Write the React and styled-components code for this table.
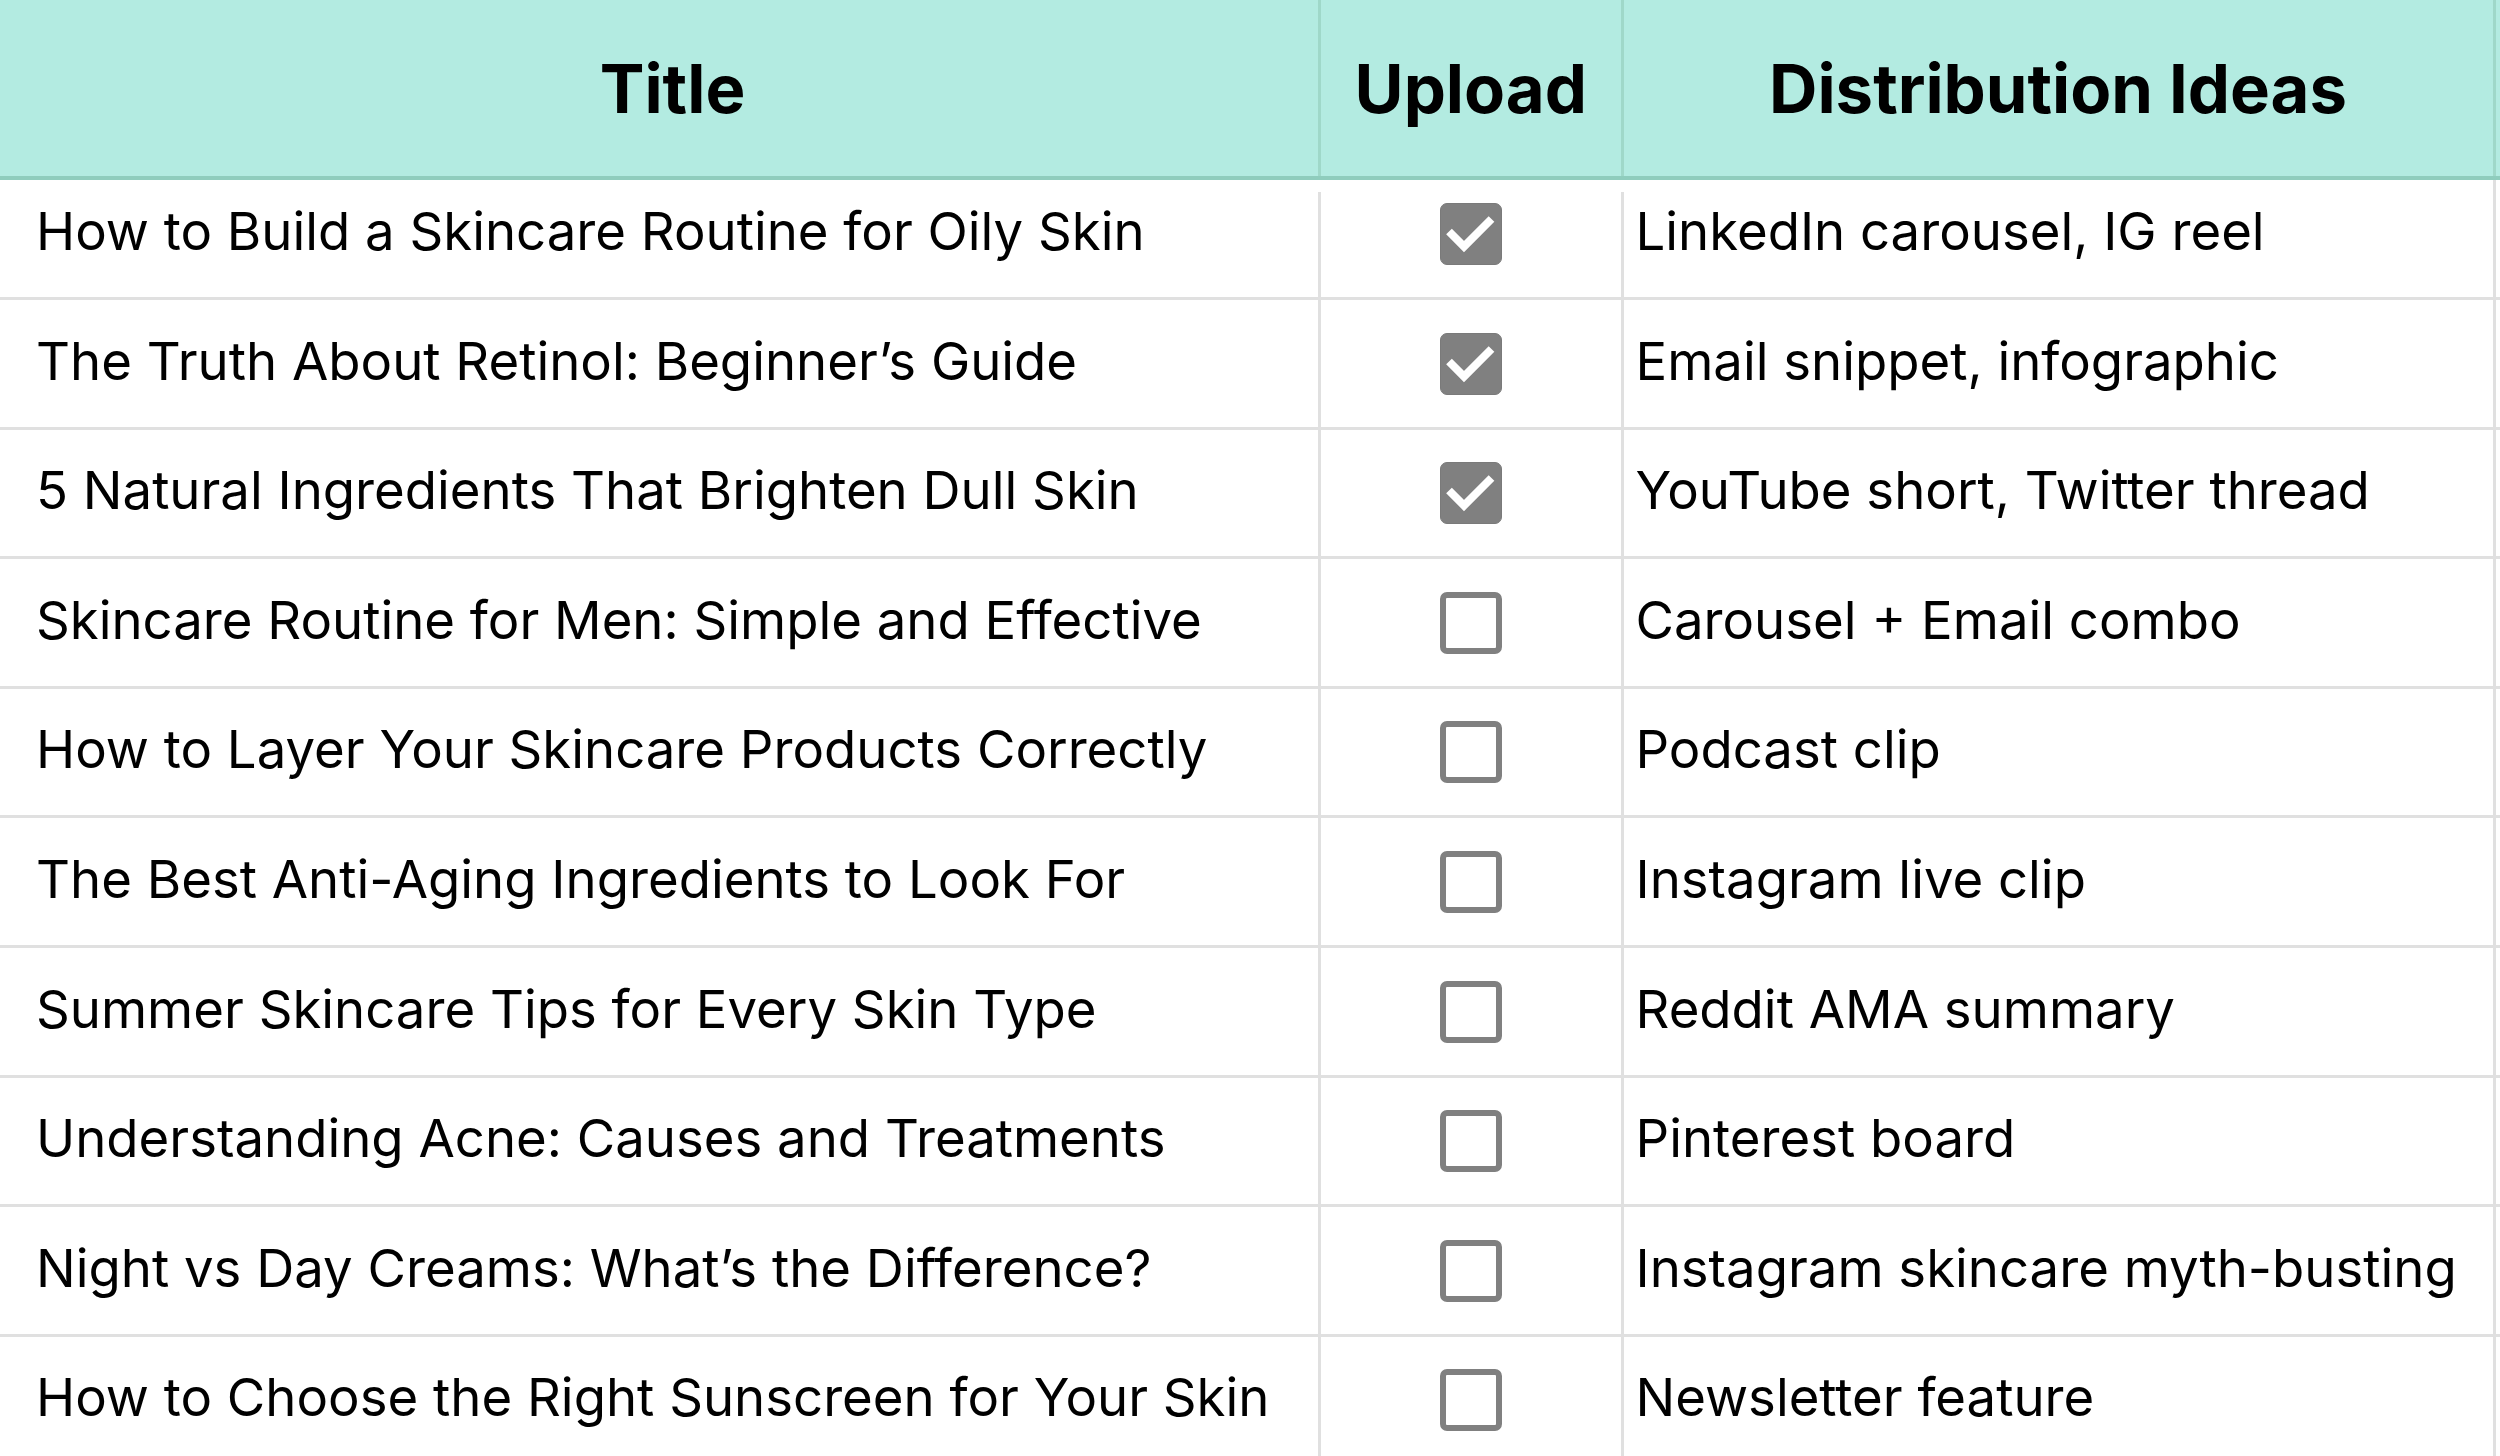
import React from "react";
import styled, { createGlobalStyle } from "styled-components";

const GlobalStyle = createGlobalStyle`
  html, body {
    margin: 0;
    padding: 0;
    background: #ffffff;
    overflow: hidden;
  }
  body {
    font-family: Inter, "Noto Sans", "Liberation Sans", sans-serif;
    color: #000;
  }
`;

const COLS = "1321px 302.5px 872px 1fr";

const Table = styled.div`
  width: 2500px;
  display: flex;
  flex-direction: column;
`;

const HeaderRow = styled.div`
  display: grid;
  grid-template-columns: ${COLS};
  height: 176px;
  background: #b3ebe1;
  border-bottom: 4px solid #8fcdbd;
`;

const HeaderCell = styled.div`
  display: flex;
  align-items: center;
  justify-content: center;
  padding-left: ${(p) => p.$shift || 0}px;
  box-sizing: border-box;
  border-right: ${(p) => (p.$last ? "none" : "3px solid #9fd8c9")};
  font-family: Inter, "Noto Sans", sans-serif;
  font-weight: 700;
  font-size: 67px;
  line-height: 1;
  color: #000;
  white-space: nowrap;
`;

const Gap = styled.div`
  display: grid;
  grid-template-columns: ${COLS};
  height: 12px;
`;

const GapCell = styled.div`
  box-sizing: border-box;
  border-right: ${(p) => (p.$line ? "3px solid #e0e0e0" : "none")};
`;

const Row = styled.div`
  display: grid;
  grid-template-columns: ${COLS};
  height: ${(p) => p.$height}px;
  border-bottom: 3px solid #e0e0e0;
  flex-shrink: 0;
`;

const Cell = styled.div`
  display: flex;
  align-items: flex-end;
  justify-content: ${(p) => (p.$center ? "center" : "flex-start")};
  box-sizing: border-box;
  padding-left: ${(p) => p.$pl || 0}px;
  padding-bottom: ${(p) => p.$pb || 0}px;
  border-right: ${(p) => (p.$last ? "none" : "3px solid #e0e0e0")};
  overflow: hidden;
`;

const CellText = styled.span`
  font-family: Inter, "Noto Sans", sans-serif;
  font-size: 52.7px;
  line-height: 64px;
  font-weight: 400;
  color: #000;
  white-space: nowrap;
`;

const Box = styled.div`
  width: 62px;
  height: 62px;
  box-sizing: border-box;
  border-radius: 7px;
  background: ${(p) => (p.$checked ? "#808080" : "#ffffff")};
  border: ${(p) => (p.$checked ? "1px solid #7a7a7a" : "6px solid #808080")};
  display: flex;
  align-items: center;
  justify-content: center;
`;

const CheckSvg = styled.svg`
  width: 62px;
  height: 62px;
  flex-shrink: 0;
`;

function Checkbox({ checked }) {
  return (
    <Box $checked={checked}>
      {checked && (
        <CheckSvg viewBox="0 0 62 62">
          <path
            d="M9 28.5 L24 43.5 L51.5 16"
            fill="none"
            stroke="#ffffff"
            strokeWidth="8"
            strokeLinecap="butt"
            strokeLinejoin="miter"
          />
        </CheckSvg>
      )}
    </Box>
  );
}

const rows = [
  ["How to Build a Skincare Routine for Oily Skin", true, "LinkedIn carousel, IG reel"],
  ["The Truth About Retinol: Beginner\u2019s Guide", true, "Email snippet, infographic"],
  ["5 Natural Ingredients That Brighten Dull Skin", true, "YouTube short, Twitter thread"],
  ["Skincare Routine for Men: Simple and Effective", false, "Carousel + Email combo"],
  ["How to Layer Your Skincare Products Correctly", false, "Podcast clip"],
  ["The Best Anti-Aging Ingredients to Look For", false, "Instagram live clip"],
  ["Summer Skincare Tips for Every Skin Type", false, "Reddit AMA summary"],
  ["Understanding Acne: Causes and Treatments", false, "Pinterest board"],
  ["Night vs Day Creams: What\u2019s the Difference?", false, "Instagram skincare myth-busting"],
  ["How to Choose the Right Sunscreen for Your Skin", false, "Newsletter feature"],
];

export default function App() {
  return (
    <>
      <GlobalStyle />
      <Table>
        <HeaderRow>
          <HeaderCell $shift={27}>Title</HeaderCell>
          <HeaderCell>Upload</HeaderCell>
          <HeaderCell>Distribution Ideas</HeaderCell>
          <HeaderCell $last />
        </HeaderRow>
        <Gap>
          <GapCell />
          <GapCell />
          <GapCell $line />
          <GapCell />
        </Gap>
        {rows.map(([title, done, idea], i) => (
          <Row key={title} $height={i === 0 ? 105 : 126.6}>
            <Cell $pl={36} $pb={34}>
              <CellText>{title}</CellText>
            </Cell>
            <Cell $center $pb={32}>
              <Checkbox checked={done} />
            </Cell>
            <Cell $pl={12} $pb={34}>
              <CellText>{idea}</CellText>
            </Cell>
            <Cell $last />
          </Row>
        ))}
      </Table>
    </>
  );
}
